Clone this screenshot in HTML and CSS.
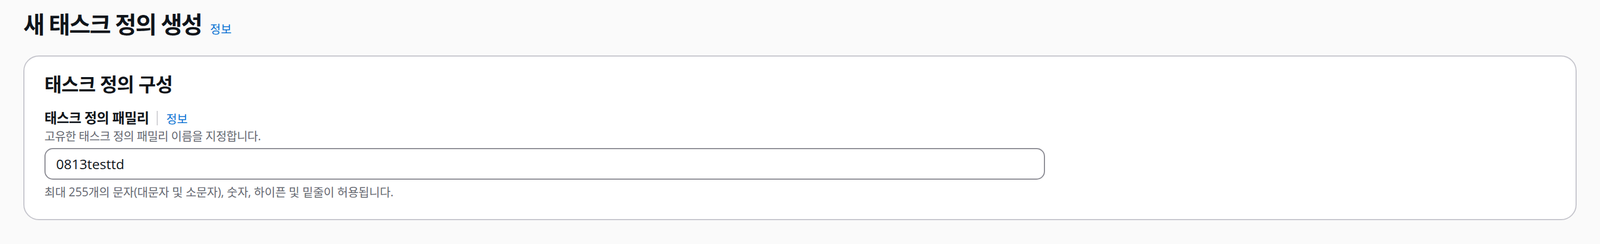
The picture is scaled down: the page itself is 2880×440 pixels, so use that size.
FILE: index.html
```html
<!DOCTYPE html>
<html lang="ko">
<head>
<meta charset="utf-8">
<title>새 태스크 정의 생성</title>
<link rel="stylesheet" href="styles.css">
</head>
<body>
<div class="page">
  <header class="page-header">
    <h1 class="page-title">새 태스크 정의 생성</h1>
    <a class="info-link title-info" href="#">정보</a>
  </header>
  <section class="card">
    <h2 class="card-title">태스크 정의 구성</h2>
    <div class="field">
      <div class="field-label-row">
        <label class="field-label" for="family">태스크 정의 패밀리</label>
        <span class="field-info"><a class="info-link" href="#">정보</a></span>
      </div>
      <div class="field-description">고유한 태스크 정의 패밀리 이름을 지정합니다.</div>
      <input class="text-input" id="family" type="text" value="0813testtd">
      <div class="field-constraint">최대 255개의 문자(대문자 및 소문자), 숫자, 하이픈 및 밑줄이 허용됩니다.</div>
    </div>
  </section>
</div>
</body>
</html>
```
FILE: styles.css
```css
* { box-sizing: border-box; }
html, body { margin: 0; }
body {
  background: #fafafa;
  font-family: "Open Sans", "Noto Sans CJK KR", sans-serif;
  color: #0f141a;
}
.page { padding: 16px 42px 0; }
.page-header {
  display: flex;
  align-items: baseline;
  gap: 15px;
  height: 56px;
}
.page-title {
  margin: 0;
  font-size: 42px;
  line-height: 56px;
  font-weight: 700;
  letter-spacing: -0.045em;
}
.info-link {
  color: #0972d3;
  text-decoration: none;
  font-size: 21px;
  font-weight: 400;
  letter-spacing: 0;
}
.card {
  margin-top: 28px;
  background: #ffffff;
  border: 2px solid #c6c6cd;
  border-radius: 28px;
  padding: 30px 36px 35px;
}
.card-title {
  margin: 0;
  font-size: 34px;
  line-height: 40px;
  font-weight: 700;
  letter-spacing: -0.02em;
}
.field { margin-top: 25px; }
.field-label-row {
  display: flex;
  align-items: center;
  height: 32px;
}
.field-label {
  font-size: 24.5px;
  line-height: 32px;
  font-weight: 700;
  letter-spacing: -0.02em;
}
.field-info {
  display: flex;
  align-items: center;
  height: 26px;
  margin-left: 14px;
  padding-left: 15px;
  border-left: 2px solid #d1d1d6;
}
.field-description {
  margin-top: 2px;
  font-size: 21px;
  line-height: 28px;
  color: #656871;
  letter-spacing: -0.02em;
}
.text-input {
  display: block;
  margin-top: 8px;
  width: 66.2%;
  height: 57px;
  padding: 0 19px;
  border: 2px solid #8c8c94;
  border-radius: 15px;
  background: #ffffff;
  font-family: "Open Sans", "Noto Sans CJK KR", sans-serif;
  font-size: 24.5px;
  color: #0f141a;
  outline: none;
}
.field-constraint {
  margin-top: 8px;
  font-size: 21px;
  line-height: 28px;
  color: #656871;
  letter-spacing: -0.008em;
}
```
